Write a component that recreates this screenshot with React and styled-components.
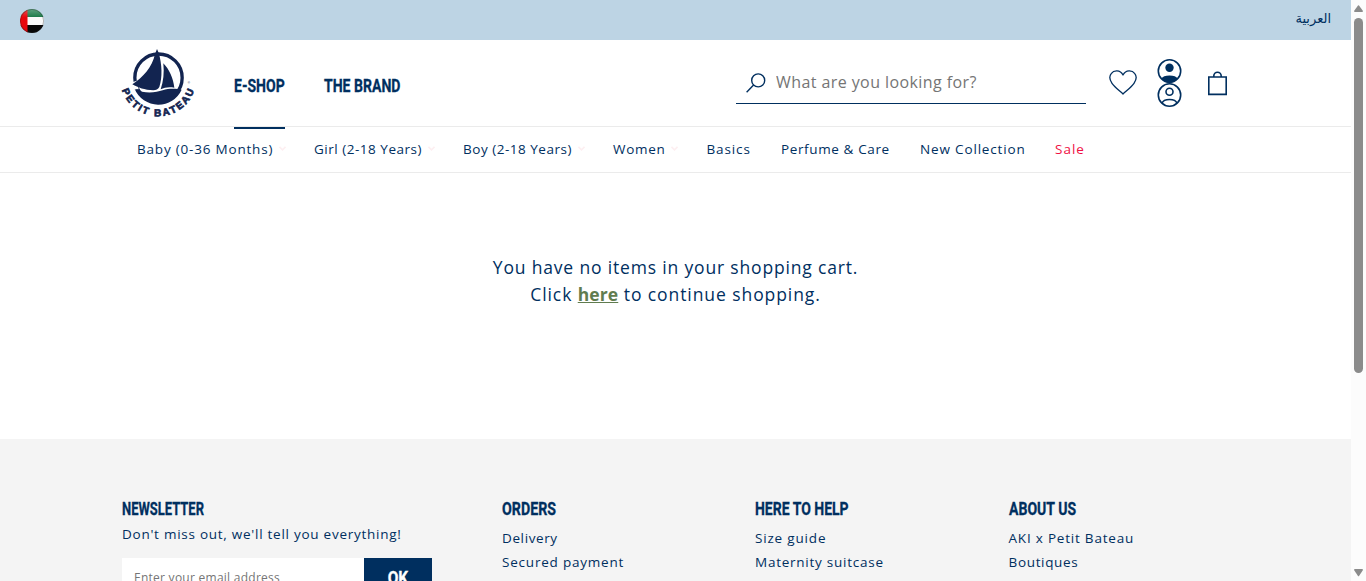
import React from "react";
import styled, { createGlobalStyle } from "styled-components";

const navy = "#002f5f";

const Global = createGlobalStyle`
  * { box-sizing: border-box; }
  body { margin: 0; background: #fff; overflow: hidden; }
  a { color: inherit; text-decoration: none; }
`;

const Window = styled.div`
  display: flex;
  width: 1366px;
  height: 581px;
  overflow: hidden;
  color: ${navy};
  font-family: "Open Sans", sans-serif;
`;
const Page = styled.div`
  width: 1351px;
  height: 581px;
  overflow: hidden;
`;

const TopBar = styled.div`
  display: flex;
  align-items: center;
  justify-content: space-between;
  height: 40px;
  padding: 2px 20px 0;
  background: #bdd4e4;
`;
const Language = styled.a`
  font: 13px/20px "DejaVu Sans", sans-serif;
  margin-top: -4px;
`;

const Header = styled.header`
  display: flex;
  height: 87px;
  padding-left: 121px;
  border-bottom: 1px solid #ebebeb;
`;
const LogoLink = styled.a`
  width: 113px;
  padding-top: 8px;
  svg { display: block; }
`;
const Tab = styled.a`
  width: ${(p) => p.$width}px;
  height: 89px;
  margin-right: 39px;
  padding-top: 34px;
  border-bottom: 2px solid ${(p) => (p.$active ? navy : "transparent")};
  position: relative;
`;
const Condensed = styled.span`
  display: block;
  width: max-content;
  font: 700 18px/24px Roboto, sans-serif;
  -webkit-text-stroke: 0.3px currentColor;
  transform: scaleX(${(p) => p.$scale || 1});
  transform-origin: ${(p) => (p.$centered ? "center" : "left")} center;
  white-space: nowrap;
`;
const Search = styled.label`
  display: flex;
  align-items: center;
  width: 350px;
  height: 42px;
  margin: 22px 0 0 auto;
  padding-left: 10px;
  border-bottom: 1px solid ${navy};
`;
const SearchInput = styled.input`
  width: 290px;
  margin-left: 10px;
  padding: 0 0 2px;
  border: 0;
  outline: 0;
  background: none;
  font: 16px/24px "Open Sans", sans-serif;
  letter-spacing: 0.42px;
  &::placeholder { color: #757575; opacity: 1; }
`;
const Actions = styled.div`
  display: flex;
  width: 265px;
  padding-left: 23px;
  svg { display: block; }
`;
const Action = styled.a`
  width: ${(p) => p.$width}px;
  padding-top: ${(p) => p.$top}px;
`;

const Nav = styled.nav`
  display: flex;
  height: 46px;
  padding: 0 0 2px 137px;
  border-bottom: 1px solid #ebebeb;
`;
const NavItem = styled.a`
  display: flex;
  align-items: center;
  gap: 6px;
  flex: none;
  width: ${(p) => p.$width}px;
  color: ${(p) => (p.$sale ? "#ef1043" : navy)};
  font-size: 13.5px;
  line-height: 20px;
  letter-spacing: ${(p) => p.$spacing}px;
  white-space: nowrap;
`;

const Empty = styled.main`
  height: 266px;
  padding-top: 81px;
  text-align: center;
  font-size: 17.5px;
  line-height: 27px;
  p { margin: 0; }
`;
const Line = styled.p`
  letter-spacing: ${(p) => p.$spacing}px;
`;
const Here = styled.a`
  && {
    color: #607c4f;
    font-weight: 700;
    letter-spacing: 0.1px;
    text-decoration: underline;
  }
`;

const Footer = styled.footer`
  display: flex;
  height: 142px;
  padding: 58px 0 0 122px;
  background: #f4f4f4;
  overflow: hidden;
`;
const Column = styled.section`
  flex: none;
  width: ${(p) => p.$width}px;
`;
const Links = styled.div`
  display: flex;
  flex-direction: column;
  padding-top: 5px;
`;
const FooterText = styled.span`
  display: block;
  font-size: 13.5px;
  line-height: 24px;
  letter-spacing: ${(p) => p.$spacing}px;
  white-space: nowrap;
`;
const Intro = styled(FooterText)`
  padding-top: 1px;
`;
const Form = styled.form`
  display: flex;
  width: 310px;
  height: 40px;
  margin-top: 12px;
`;
const Email = styled.input`
  width: 242px;
  padding: 0 12px;
  border: 0;
  background: #fff;
  font: 12px/20px "Open Sans", sans-serif;
  letter-spacing: 0.26px;
  &::placeholder { color: #757575; opacity: 1; }
`;
const Submit = styled.button`
  display: flex;
  justify-content: center;
  align-items: center;
  width: 68px;
  padding: 0;
  border: 0;
  background: ${navy};
  color: #fff;
`;

const Scrollbar = styled.div`
  display: flex;
  flex-direction: column;
  align-items: center;
  justify-content: space-between;
  width: 15px;
  height: 581px;
  padding: 5px 0 4px;
  background: #fcfcfc;
`;
const Thumb = styled.div`
  width: 9px;
  height: 355px;
  margin: 5px 0 auto;
  border-radius: 5px;
  background: #8b8b8b;
`;

const Flag = () => (
  <svg width="24" height="24" viewBox="0 0 24 24">
    <defs>
      <clipPath id="disc"><circle cx="12" cy="12" r="12" /></clipPath>
      <linearGradient id="shine" x1="0" y1="0" x2="0" y2="1">
        <stop offset="0" stopColor="#fff" stopOpacity="0.3" />
        <stop offset="0.6" stopColor="#fff" stopOpacity="0" />
      </linearGradient>
    </defs>
    <g clipPath="url(#disc)">
      <path fill="#1b7a48" d="M0 0h24v8H0z" />
      <path fill="#fafafa" d="M0 8h24v8H0z" />
      <path fill="#080808" d="M0 16h24v8H0z" />
      <path fill="#e8060c" d="M0 0h7.5v24H0z" />
      <path fill="url(#shine)" d="M0 0h24v14H0z" />
    </g>
    <circle cx="12" cy="12" r="11.6" fill="none" stroke="#222" strokeOpacity="0.4" strokeWidth="0.8" />
  </svg>
);

const Logo = () => (
  <svg width="76" height="72" viewBox="33 24 228 216" fill="#122450">
    <circle cx="145.5" cy="113" r="71" fill="none" stroke="#122450" strokeWidth="10" />
    <path fill="#fff" d="M62 128 L80 122 L86 148 L68 146Z" />
    <path d="M141 27 L146 38 C156 72 158 112 148 141 Q142 151 130 151 C103 150 85 143 67 133 C99 112 127 81 135 42Z" />
    <path d="M160 70 C178 88 190 116 193 143 C177 140 164 142 152 148 C160 124 163 99 160 70Z" />
    <path d="M74 147 C104 163 137 158 158 151 C180 144 200 147 215 149 A77 77 0 0 1 74 147Z" />
    <path id="rim" fill="none" d="M36 150 A114 114 0 0 0 253 150" />
    <text fontFamily="Liberation Sans, sans-serif" fontWeight="700" fontSize="30" stroke="#122450" strokeWidth="2">
      <textPath href="#rim" textLength="285" lengthAdjust="spacing">PETIT BATEAU</textPath>
    </text>
    <text x="233" y="133" fontFamily="Liberation Sans, sans-serif" fontSize="9">®</text>
  </svg>
);

const SearchIcon = () => (
  <svg width="20" height="20" viewBox="0 0 20 20" fill="none" stroke={navy} strokeWidth="1.4">
    <circle cx="12.2" cy="7.4" r="6.5" />
    <path d="M7.6 12 .6 19.2" />
  </svg>
);
const Heart = () => (
  <svg width="28" height="25" viewBox="0 0 28 25" fill="none" stroke={navy} strokeWidth="1.3" strokeLinejoin="round">
    <path d="M14 24 C10.8 21 5.7 17.2 3 13.3 C.7 10 .1 6.3 2.2 3.6 C4.7.2 11.1-.5 14 5 C16.9-.5 23.3.2 25.8 3.6 C27.9 6.3 27.3 10 25 13.3 C22.3 17.2 17.2 21 14 24Z" />
  </svg>
);
const Users = () => (
  <svg width="27" height="48" viewBox="0 0 27 48" fill="none" stroke={navy} strokeWidth="1.6">
    <circle cx="13.5" cy="12" r="11.2" />
    <circle cx="13.5" cy="8.7" r="4.2" fill={navy} stroke="none" />
    <path fill={navy} stroke="none" d="M5.5 19.6 Q7 16.4 13.5 16.4 Q20 16.4 21.5 19.6 Q18.5 24 13.5 24 Q8.5 24 5.5 19.6Z" />
    <circle cx="13.5" cy="36" r="11.2" />
    <circle cx="13.5" cy="32.7" r="3.5" />
    <path d="M6 44.2 Q7.3 40.5 13.5 40.5 Q19.7 40.5 21 44.2" />
  </svg>
);
const Bag = () => (
  <svg width="21" height="25" viewBox="0 0 21 25" fill="none" stroke={navy} strokeWidth="1.6">
    <path d="M1.8 6h17.4v17.4H1.8zM6.8 6V5a3.7 3.7 0 0 1 7.4 0v1" />
  </svg>
);
const Chevron = () => (
  <svg width="7" height="5" viewBox="0 0 7 5" fill="none" stroke="#fdeff1" strokeWidth="1.6">
    <path d="M.5.8 3.5 3.8 6.5.8" />
  </svg>
);
const Arrow = ({ down }) => (
  <svg width="9" height="8" viewBox="0 0 9 8" fill="#8b8b8b">
    <path d={down ? "M0 1 Q0 0 1 0H8Q9 0 9 1L5 7Q4.5 7.6 4 7Z" : "M0 6 4 .6Q4.5 0 5 .6L9 6Q9 7 8 7H1Q0 7 0 6Z"} />
  </svg>
);

const categories = [
  { label: "Baby (0-36 Months)", width: 177, spacing: 0.8, menu: true },
  { label: "Girl (2-18 Years)", width: 149, spacing: 0.52, menu: true },
  { label: "Boy (2-18 Years)", width: 150, spacing: 0.52, menu: true },
  { label: "Women", width: 93.5, spacing: 0.7, menu: true },
  { label: "Basics", width: 74.5, spacing: 0.87 },
  { label: "Perfume & Care", width: 139, spacing: 0.62 },
  { label: "New Collection", width: 135, spacing: 0.84 },
  { label: "Sale", width: 40, spacing: 1, sale: true },
];

const columns = [
  { title: "ORDERS", scale: 0.79, width: 253, links: [["Delivery", 0.62], ["Secured payment", 0.79]] },
  { title: "HERE TO HELP", scale: 0.777, width: 253.5, links: [["Size guide", 0.82], ["Maternity suitcase", 0.75]] },
  { title: "ABOUT US", scale: 0.78, width: 250, links: [["AKI x Petit Bateau", 0.79], ["Boutiques", 0.67]] },
];

export default function App() {
  return (
    <Window>
      <Global />
      <Page>
        <TopBar>
          <Flag />
          <Language href="#" lang="ar">العربية</Language>
        </TopBar>
        <Header>
          <LogoLink href="#"><Logo /></LogoLink>
          <Tab href="#" $width={51} $active><Condensed $scale={0.78}>E-SHOP</Condensed></Tab>
          <Tab href="#" $width={77}><Condensed $scale={0.78}>THE BRAND</Condensed></Tab>
          <Search>
            <SearchIcon />
            <SearchInput placeholder="What are you looking for?" />
          </Search>
          <Actions>
            <Action href="#" $width={47} $top={30}><Heart /></Action>
            <Action href="#" $width={51} $top={19}><Users /></Action>
            <Action href="#" $width={21} $top={31}><Bag /></Action>
          </Actions>
        </Header>
        <Nav>
          {categories.map((c) => (
            <NavItem key={c.label} href="#" $width={c.width} $spacing={c.spacing} $sale={c.sale}>
              {c.label}
              {c.menu && <Chevron />}
            </NavItem>
          ))}
        </Nav>
        <Empty>
          <Line $spacing={0.83}>You have no items in your shopping cart.</Line>
          <Line $spacing={0.92}>Click <Here href="#">here</Here> to continue shopping.</Line>
        </Empty>
        <Footer>
          <Column $width={380}>
            <Condensed $scale={0.72}>NEWSLETTER</Condensed>
            <Intro $spacing={0.74}>Don't miss out, we'll tell you everything!</Intro>
            <Form>
              <Email placeholder="Enter your email address" />
              <Submit type="button"><Condensed $scale={0.86} $centered>OK</Condensed></Submit>
            </Form>
          </Column>
          {columns.map((col) => (
            <Column key={col.title} $width={col.width}>
              <Condensed $scale={col.scale}>{col.title}</Condensed>
              <Links>
                {col.links.map(([label, spacing]) => (
                  <FooterText as="a" href="#" key={label} $spacing={spacing}>{label}</FooterText>
                ))}
              </Links>
            </Column>
          ))}
        </Footer>
      </Page>
      <Scrollbar>
        <Arrow />
        <Thumb />
        <Arrow down />
      </Scrollbar>
    </Window>
  );
}
